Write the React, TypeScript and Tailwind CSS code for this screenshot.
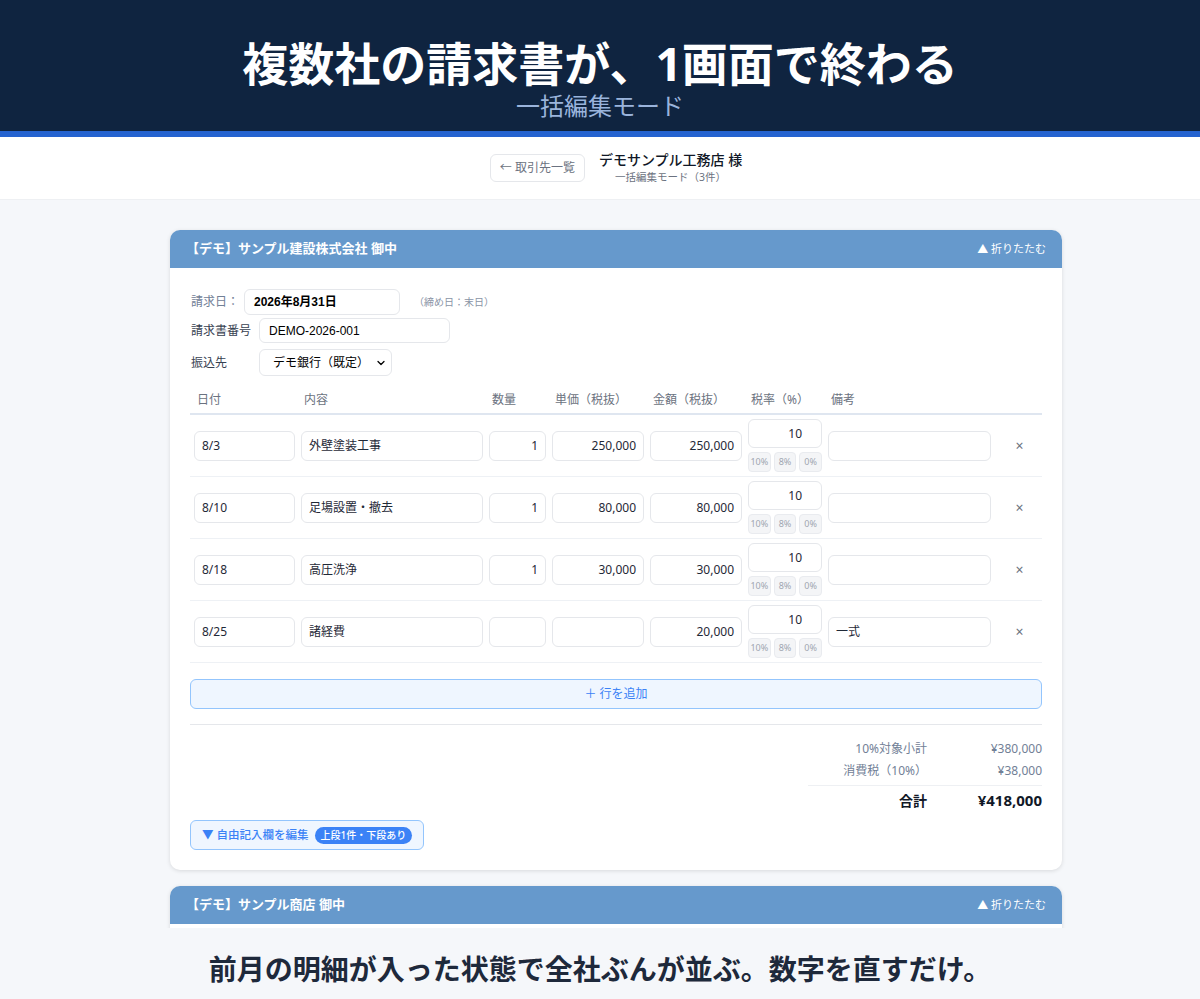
import { ChevronDown } from "lucide-react";

const SANS = "font-['Noto_Sans','Noto_Sans_CJK_JP',sans-serif]";
const ARIAL = "font-['Liberation_Sans','Noto_Sans_CJK_JP',sans-serif]";

type Row = {
  date: string;
  desc: string;
  qty: string;
  unit: string;
  amount: string;
  tax: string;
  note: string;
};

const rows: Row[] = [
  { date: "8/3", desc: "外壁塗装工事", qty: "1", unit: "250,000", amount: "250,000", tax: "10", note: "" },
  { date: "8/10", desc: "足場設置・撤去", qty: "1", unit: "80,000", amount: "80,000", tax: "10", note: "" },
  { date: "8/18", desc: "高圧洗浄", qty: "1", unit: "30,000", amount: "30,000", tax: "10", note: "" },
  { date: "8/25", desc: "諸経費", qty: "", unit: "", amount: "20,000", tax: "10", note: "一式" },
];

const GRID = "grid grid-cols-[101px_182px_57px_92px_92px_74px_163px_1fr] gap-x-[6px] pl-[4px]";

function Field({ value, right }: { value: string; right?: boolean }) {
  return (
    <div
      className={`flex h-[30px] items-center rounded-md border border-[#e5e7eb] bg-white px-[7px] text-[12px] text-[#1f2937] ${
        right ? "justify-end" : ""
      }`}
    >
      {value}
    </div>
  );
}

function CardHeader({ title }: { title: string }) {
  return (
    <div className="flex h-[38px] items-center justify-between bg-[#6699cc] px-[16px] text-white">
      <span className="text-[13px] font-bold">{title}</span>
      <span className="text-[11px]">▲ 折りたたむ</span>
    </div>
  );
}

function LineRow({ row }: { row: Row }) {
  return (
    <div className={`${GRID} items-center border-b border-[#eef1f5] py-[4px]`}>
      <Field value={row.date} />
      <Field value={row.desc} />
      <Field value={row.qty} right />
      <Field value={row.unit} right />
      <Field value={row.amount} right />
      <div className="flex flex-col gap-[4px]">
        <div className="flex h-[29px] items-center justify-end rounded-md border border-[#e5e7eb] bg-white pr-[19px] text-[12px] text-[#1f2937]">
          {row.tax}
        </div>
        <div className="flex h-[20px] gap-[3px]">
          {["10%", "8%", "0%"].map((t) => (
            <span
              key={t}
              className="flex flex-1 items-center justify-center rounded border border-[#e9ebef] bg-[#f4f5f7] text-[9px] text-[#a0a6b1]"
            >
              {t}
            </span>
          ))}
        </div>
      </div>
      <Field value={row.note} />
      <div className="text-center text-[14px] text-[#6b7280]">×</div>
    </div>
  );
}

export default function App() {
  return (
    <div className={`flex h-[999px] flex-col overflow-hidden bg-[#f5f7fa] ${SANS}`}>
      {/* hero */}
      <header className="border-b-[6px] border-[#2563d0] bg-[#0f2440] pt-[38px] pb-[11px] text-center">
        <h1 className="text-[46px] leading-[50px] font-bold text-white">複数社の請求書が、1画面で終わる</h1>
        <p className="mt-[4px] text-[24px] leading-[28px] text-[#9ab4dc]">一括編集モード</p>
      </header>

      {/* top bar */}
      <div className="flex h-[63px] items-center justify-center border-b border-[#eef0f3] bg-white pl-[32px]">
        <div className="flex items-center gap-[14px]">
          <button className="flex h-[28px] items-center rounded-md border border-[#e5e7eb] bg-white px-[9px] text-[12px] text-[#6b7280]">
            ← 取引先一覧
          </button>
          <div className="flex flex-col items-center">
            <span className="text-[14px] leading-[18px] font-medium text-[#111827]">デモサンプル工務店 様</span>
            <span className="text-[10.5px] leading-[16px] text-[#6b7280]">一括編集モード（3件）</span>
          </div>
        </div>
      </div>

      {/* main */}
      <main className="flex-1 overflow-hidden pt-[30px] pl-[32px]">
        <div className="mx-auto flex w-[892px] flex-col gap-[16px]">
          <section className="overflow-hidden rounded-[10px] bg-white shadow-[0_1px_4px_rgba(0,0,0,0.12)]">
            <CardHeader title="【デモ】サンプル建設株式会社 御中" />
            <div className="px-5 pt-[21px] pb-[20px]">
              <div className="mb-[3px] flex h-[26px] items-center pl-px">
                <span className="w-[53px] text-[12px] text-[#718096]">請求日：</span>
                <div className={`flex h-[26px] w-[156px] items-center rounded-md border border-[#e5e7eb] px-[9px] text-[12px] font-bold text-black ${ARIAL}`}>
                  2026年8月31日
                </div>
                <span className="ml-[14px] text-[10px] text-[#8a94a6]">（締め日：末日）</span>
              </div>
              <div className="mb-[6px] flex h-[25px] items-center pl-px">
                <span className="w-[68px] text-[12px] text-[#374151]">請求書番号</span>
                <div className={`flex h-[25px] w-[191px] items-center rounded-md border border-[#e5e7eb] px-[9px] text-[12px] text-black ${ARIAL}`}>
                  DEMO-2026-001
                </div>
              </div>
              <div className="flex h-[27px] items-center pl-px">
                <span className="w-[68px] text-[12px] text-[#374151]">振込先</span>
                <div className={`flex h-[27px] w-[133px] items-center justify-between rounded-md border border-[#e5e7eb] pr-[4px] pl-[13px] text-[12px] text-black ${ARIAL}`}>
                  デモ銀行（既定）
                  <ChevronDown size={12} strokeWidth={2.5} />
                </div>
              </div>

              {/* table */}
              <div className={`${GRID} mt-[10px] h-[29px] items-center border-b-2 border-[#dfe6f0] text-[12px] text-[#6b7280]`}>
                {["日付", "内容", "数量", "単価（税抜）", "金額（税抜）", "税率（%）", "備考", ""].map((h, i) => (
                  <span key={i} className="pl-[3px]">
                    {h}
                  </span>
                ))}
              </div>
              {rows.map((r) => (
                <LineRow key={r.date} row={r} />
              ))}

              <button className="mt-[16px] flex h-[30px] w-full items-center justify-center rounded-md border border-[#93c5fd] bg-[#eff6ff] text-[12px] text-[#3b82f6]">
                ＋ 行を追加
              </button>

              <div className="mt-[15px] border-t border-[#e5e7eb] pt-[13px]">
                <div className="ml-auto w-[234px]">
                  <div className="flex h-[22px] items-center text-[12px] text-[#718096]">
                    <span className="w-[119px] text-right">10%対象小計</span>
                    <span className="flex-1 text-right">¥380,000</span>
                  </div>
                  <div className="flex h-[22px] items-center text-[12px] text-[#718096]">
                    <span className="w-[119px] text-right">消費税（10%）</span>
                    <span className="flex-1 text-right">¥38,000</span>
                  </div>
                  <div className="mt-[3px] flex h-[30px] items-center border-t border-[#eef0f3] text-[#111827]">
                    <span className="w-[119px] text-right text-[14px] font-semibold">合計</span>
                    <span className="flex-1 text-right text-[15px] font-bold">¥418,000</span>
                  </div>
                </div>
              </div>

              <button className="mt-[5px] flex h-[30px] items-center gap-[6px] rounded-md border border-[#93c5fd] bg-[#eff6ff] px-[11px] text-[11.5px] font-medium text-[#3b82f6]">
                ▼ 自由記入欄を編集
                <span className="flex h-[17px] items-center rounded-full bg-[#3b82f6] px-[6px] text-[10px] text-white">
                  上段1件・下段あり
                </span>
              </button>
            </div>
          </section>

          <section className="overflow-hidden rounded-[10px] bg-white shadow-[0_1px_4px_rgba(0,0,0,0.12)]">
            <CardHeader title="【デモ】サンプル商店 御中" />
            <div className="h-[200px]" />
          </section>
        </div>
      </main>

      {/* caption */}
      <footer className="h-[71px] shrink-0 bg-[#f5f7fa] pt-[20px] text-center">
        <p className="text-[28px] leading-[42px] font-bold text-[#1e293b]">
          前月の明細が入った状態で全社ぶんが並ぶ。数字を直すだけ。
        </p>
      </footer>
    </div>
  );
}
